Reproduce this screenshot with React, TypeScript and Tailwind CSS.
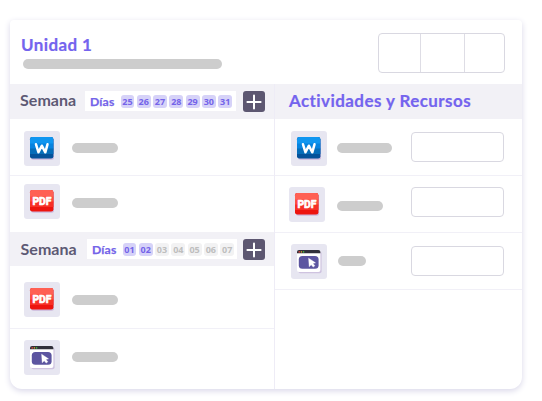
import type { ReactNode } from "react";

type Kind = "word" | "pdf" | "app";

function FileIcon({ kind }: { kind: Kind }) {
  if (kind === "app") {
    return (
      <svg width="27" height="26" viewBox="0 0 27 26" aria-hidden="true">
        <rect x="2.4" y="2.6" width="23.2" height="21.6" rx="2" fill="#cfc3e0" />
        <rect x="1" y="1.5" width="23.4" height="21.4" rx="2" fill="#fff" />
        <path d="M1 4.3V3a2 2 0 0 1 2-2h19.4a2 2 0 0 1 2 2v1.3z" fill="#302f3a" />
        <circle cx="3.2" cy="2.9" r=".8" fill="#e0443c" />
        <circle cx="5.4" cy="2.9" r=".8" fill="#cf9a2c" />
        <circle cx="7.6" cy="2.9" r=".8" fill="#48b843" />
        <rect x="2.8" y="7" width="19.8" height="12.8" rx="3.6" fill="#5c55a0" />
        <path d="M12.6 9.2l6.9 4.6-2.6.7 2 2.2-1.7 1.4-2-2.3-2 1.9z" fill="#fff" stroke="#fff" strokeWidth=".4" />
      </svg>
    );
  }
  const c =
    kind === "word"
      ? ["#1096f0", "#0783df", "#066db9", "#05529a"]
      : ["#ff6054", "#fc4c42", "#f73027", "#ed140f"];
  return (
    <svg width="27" height="26" viewBox="0 0 27 26" aria-hidden="true">
      <rect x="2" y="2.3" width="23" height="21.5" rx="2.5" fill="#ccb8dc" />
      <rect x="1" y="1" width="23.4" height="21.6" rx="2.3" fill={c[3]} />
      <path d="M1 3.3A2.3 2.3 0 0 1 3.3 1h18.8a2.3 2.3 0 0 1 2.3 2.3V8H1z" fill={c[0]} />
      <path d="M1 7.5h23.4v6H1z" fill={c[1]} />
      <path d="M1 12.5h23.4V18H1z" fill={c[2]} />
      {kind === "word" ? (
        <path d="M7 8.3l2.5 8 3.3-6.6 3.5 6.6 2.2-8" fill="none" stroke="#fff" strokeWidth="2.5" strokeLinecap="round" strokeLinejoin="round" />
      ) : (
        <text x="3.4" y="15.8" textLength="19" lengthAdjust="spacingAndGlyphs" fontSize="11.6" fontWeight="700" fill="#fff" stroke="#fff" strokeWidth=".7" strokeLinejoin="round" fontFamily="Roboto, sans-serif">PDF</text>
      )}
    </svg>
  );
}

function Tile({ kind }: { kind: Kind }) {
  return (
    <div className="flex h-[35px] w-[36px] shrink-0 items-center justify-center rounded-[3px] bg-[#e7e6f1]">
      <FileIcon kind={kind} />
    </div>
  );
}

function Bar({ className }: { className: string }) {
  return <div className={`h-[10px] shrink-0 rounded-full bg-[#cdcdcd] ${className}`} />;
}

function Row({ kind, className, bar }: { kind: Kind; className: string; bar: string }) {
  return (
    <div className={`flex items-start pl-[14px] ${className}`}>
      <Tile kind={kind} />
      <Bar className={`ml-[12px] w-[46px] ${bar}`} />
    </div>
  );
}

function Resource({ kind, className, children }: { kind: Kind; className: string; children: ReactNode }) {
  return (
    <div className={`flex items-start border-b border-[#f1f0f7] ${className}`}>
      <Tile kind={kind} />
      {children}
    </div>
  );
}

function Field({ className }: { className: string }) {
  return <div className={`mr-[18px] ml-auto h-[30px] w-[93px] shrink-0 rounded-[4px] border border-[#d9d8e1] ${className}`} />;
}

function Week({ days, active, className, box, pad }: { days: string[]; active: number; className: string; box: string; pad: string }) {
  return (
    <div className={`flex shrink-0 items-start bg-[#f2f1f6] ${className}`}>
      <div className={`shrink-0 text-[16px] leading-[20px] font-bold tracking-[0.05px] text-[#5d5974] ${pad}`}>Semana</div>
      <div className={`flex h-[20px] shrink-0 items-center bg-white pl-[5px] ${box}`}>
        <span className="w-[30.5px] shrink-0 text-[12.2px] leading-[19px] font-bold tracking-[0.15px] text-[#7464e9] [-webkit-text-stroke:0.25px_#7464e9]">Días</span>
        <div className="flex gap-[2.4px] pt-px">
          {days.map((day, i) => (
            <span
              key={day}
              className={`flex h-[13px] w-[13.9px] items-center justify-center rounded-[3px] font-['Open_Sans',sans-serif] text-[9px] leading-[13px] font-bold ${i < active ? "bg-[#d6d2f8] text-[#7464e9]" : "bg-[#f2f2f3] text-[#bebebe]"}`}
            >
              {day}
            </span>
          ))}
        </div>
      </div>
      <div className="mr-[9px] ml-auto flex h-[21px] w-[22px] shrink-0 items-center justify-center rounded-[3px] bg-[#5d5771]">
        <svg width="16" height="16" viewBox="0 0 16 16" fill="none" stroke="#fff" strokeWidth="2" strokeLinecap="round" aria-hidden="true">
          <path d="M8 1.4v13.2M1.4 8h13.2" />
        </svg>
      </div>
    </div>
  );
}

export default function App() {
  return (
    <div className="h-[401px] w-[542px] overflow-hidden bg-white pt-[20px] pl-[10px] font-[Lato,sans-serif]">
      <main className="flex h-[369px] w-[512px] flex-col overflow-hidden rounded-t-[4px] rounded-b-[12px] bg-white shadow-[0_2px_6px_0px_#d9d7e9]">
        <header className="flex h-[64px] shrink-0 items-start">
          <div>
            <h1 className="mt-[14px] ml-[11px] text-[17px] leading-[22px] font-bold tracking-[0.4px] text-[#7464ee] [-webkit-text-stroke:0.2px_#7464ee]">Unidad 1</h1>
            <Bar className="mt-[3px] ml-[12.5px] w-[199px]" />
          </div>
          <div className="mt-[13px] mr-[17px] ml-auto flex h-[40px] w-[127px] rounded-[4px] border border-[#d9d8e1]">
            <div className="w-[42px] border-r border-[#dedde5]" />
            <div className="w-[44px] border-r border-[#dedde5]" />
          </div>
        </header>
        <div className="flex min-h-0 grow">
          <section className="flex w-[265px] shrink-0 flex-col border-r border-[#eeecf6]">
            <Week days={["25", "26", "27", "28", "29", "30", "31"]} active={7} className="h-[35px] pt-[7px]" pad="-mt-px w-[65px] pl-[10px]" box="ml-[10px] w-[151px]" />
            <Row kind="word" className="h-[57px] border-b border-[#f1f0f7] pt-[12px]" bar="mt-[12px]" />
            <Row kind="pdf" className="h-[56px] pt-[8px]" bar="mt-[14px]" />
            <Week days={["01", "02", "03", "04", "05", "06", "07"]} active={2} className="h-[34px] pt-[7px]" pad="w-[65px] pl-[10.5px]" box="ml-[12px] w-[150px]" />
            <Row kind="pdf" className="h-[63px] border-b border-[#f1f0f7] pt-[16px]" bar="mt-[13px]" />
            <Row kind="app" className="h-[60px] pt-[11px]" bar="mt-[12px]" />
          </section>
          <section className="flex grow flex-col">
            <h2 className="h-[35px] shrink-0 bg-[#f2f1f6] pt-[6px] pl-[14px] text-[17px] leading-[22px] font-bold tracking-[0.42px] text-[#7464ee] [-webkit-text-stroke:0.2px_#7464ee]">Actividades y Recursos</h2>
            <Resource kind="word" className="h-[57px] pt-[12px] pl-[16px]">
              <Bar className="mt-[12px] ml-[10px] w-[55px]" />
              <Field className="mt-px" />
            </Resource>
            <Resource kind="pdf" className="h-[57px] pt-[11px] pl-[14px]">
              <Bar className="mt-[14px] ml-[12px] w-[46px]" />
              <Field className="mt-0" />
            </Resource>
            <Resource kind="app" className="h-[57px] pt-[11px] pl-[16px]">
              <Bar className="mt-[12px] ml-[11px] w-[28px]" />
              <Field className="mt-[2px]" />
            </Resource>
          </section>
        </div>
      </main>
    </div>
  );
}
